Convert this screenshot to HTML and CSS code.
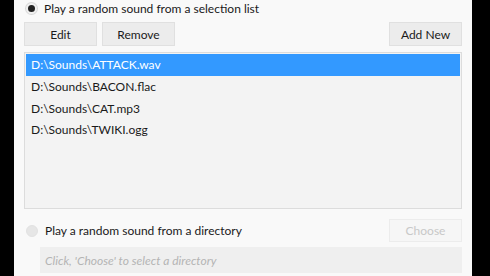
FILE: index.html
```html
<!DOCTYPE html>
<html lang="en">
<head>
	<meta charset="UTF-8">
	<title>Sound options</title>
	<link rel="stylesheet" href="styles.css">
</head>
<body>
	<div class="frame">
		<div class="panel">
			<label class="option">
				<span class="radio checked"></span>
				<span>Play a random sound from a selection list</span>
			</label>
			<div class="toolbar">
				<button class="btn">Edit</button>
				<button class="btn">Remove</button>
				<span class="spacer"></span>
				<button class="btn">Add New</button>
			</div>
			<ul class="list">
				<li class="selected">D:\Sounds\ATTACK.wav</li>
				<li>D:\Sounds\BACON.flac</li>
				<li>D:\Sounds\CAT.mp3</li>
				<li>D:\Sounds\TWIKI.ogg</li>
			</ul>
			<div class="dir-row">
				<label class="option disabled">
					<span class="radio"></span>
					<span>Play a random sound from a directory</span>
				</label>
				<button class="btn" disabled>Choose</button>
			</div>
			<div class="dir-box">Click, 'Choose' to select a directory</div>
		</div>
	</div>
</body>
</html>
```

FILE: styles.css
```css
html, body {
	margin: 0;
	padding: 0;
	background: #000;
	font-family: Lato, "Noto Sans", sans-serif;
	font-size: 12px;
	color: #1a1a1a;
}

.frame {
	display: flex;
	height: 276px;
	padding: 0 18px 0 14px;
}

.panel {
	flex: 1;
	background: #f9f9f9;
	padding: 0 10px 0 10px;
	display: flex;
	flex-direction: column;
	overflow: hidden;
}

.option {
	display: flex;
	align-items: center;
	gap: 7px;
	height: 16px;
}

.radio {
	width: 12px;
	height: 12px;
	border-radius: 50%;
	box-sizing: border-box;
	border: 1px solid #e2e2e2;
	background: #e6e6e6;
	margin-left: 2px;
}

.radio.checked {
	background: #222;
	border: 2px solid #f0f0f0;
	box-shadow: 0 0 0 1px #d8d8d8;
	width: 11px;
	height: 11px;
}

.toolbar {
	display: flex;
	gap: 5px;
	margin-top: 6px;
}

.spacer {
	flex: 1;
}

.btn {
	width: 73px;
	height: 24px;
	font-family: inherit;
	font-size: 12px;
	color: #1a1a1a;
	background: #ececec;
	border: 1px solid #e0e0e0;
	padding: 0;
}

.btn:disabled {
	background: #f6f6f6;
	color: #c8c8c8;
	border-color: #ececec;
}

.list {
	list-style: none;
	margin: 6px 0 0 0;
	padding: 1px 1px;
	height: 153px;
	background: #f3f3f3;
	border: 1px solid #dcdcdc;
}

.list li {
	height: 21.5px;
	line-height: 22px;
	padding-left: 5px;
}

.list li.selected {
	background: #3399ff;
	color: #fff;
	height: 22px;
	line-height: 22px;
}

.dir-row {
	display: flex;
	align-items: center;
	justify-content: space-between;
	margin-top: 10px;
}

.dir-row .btn {
	height: 23px;
}

.dir-box {
	margin: 5px 0 0 16px;
	height: 26px;
	line-height: 27px;
	background: #efefef;
	color: #b4b4b4;
	font-style: italic;
	padding-left: 5px;
}
```
